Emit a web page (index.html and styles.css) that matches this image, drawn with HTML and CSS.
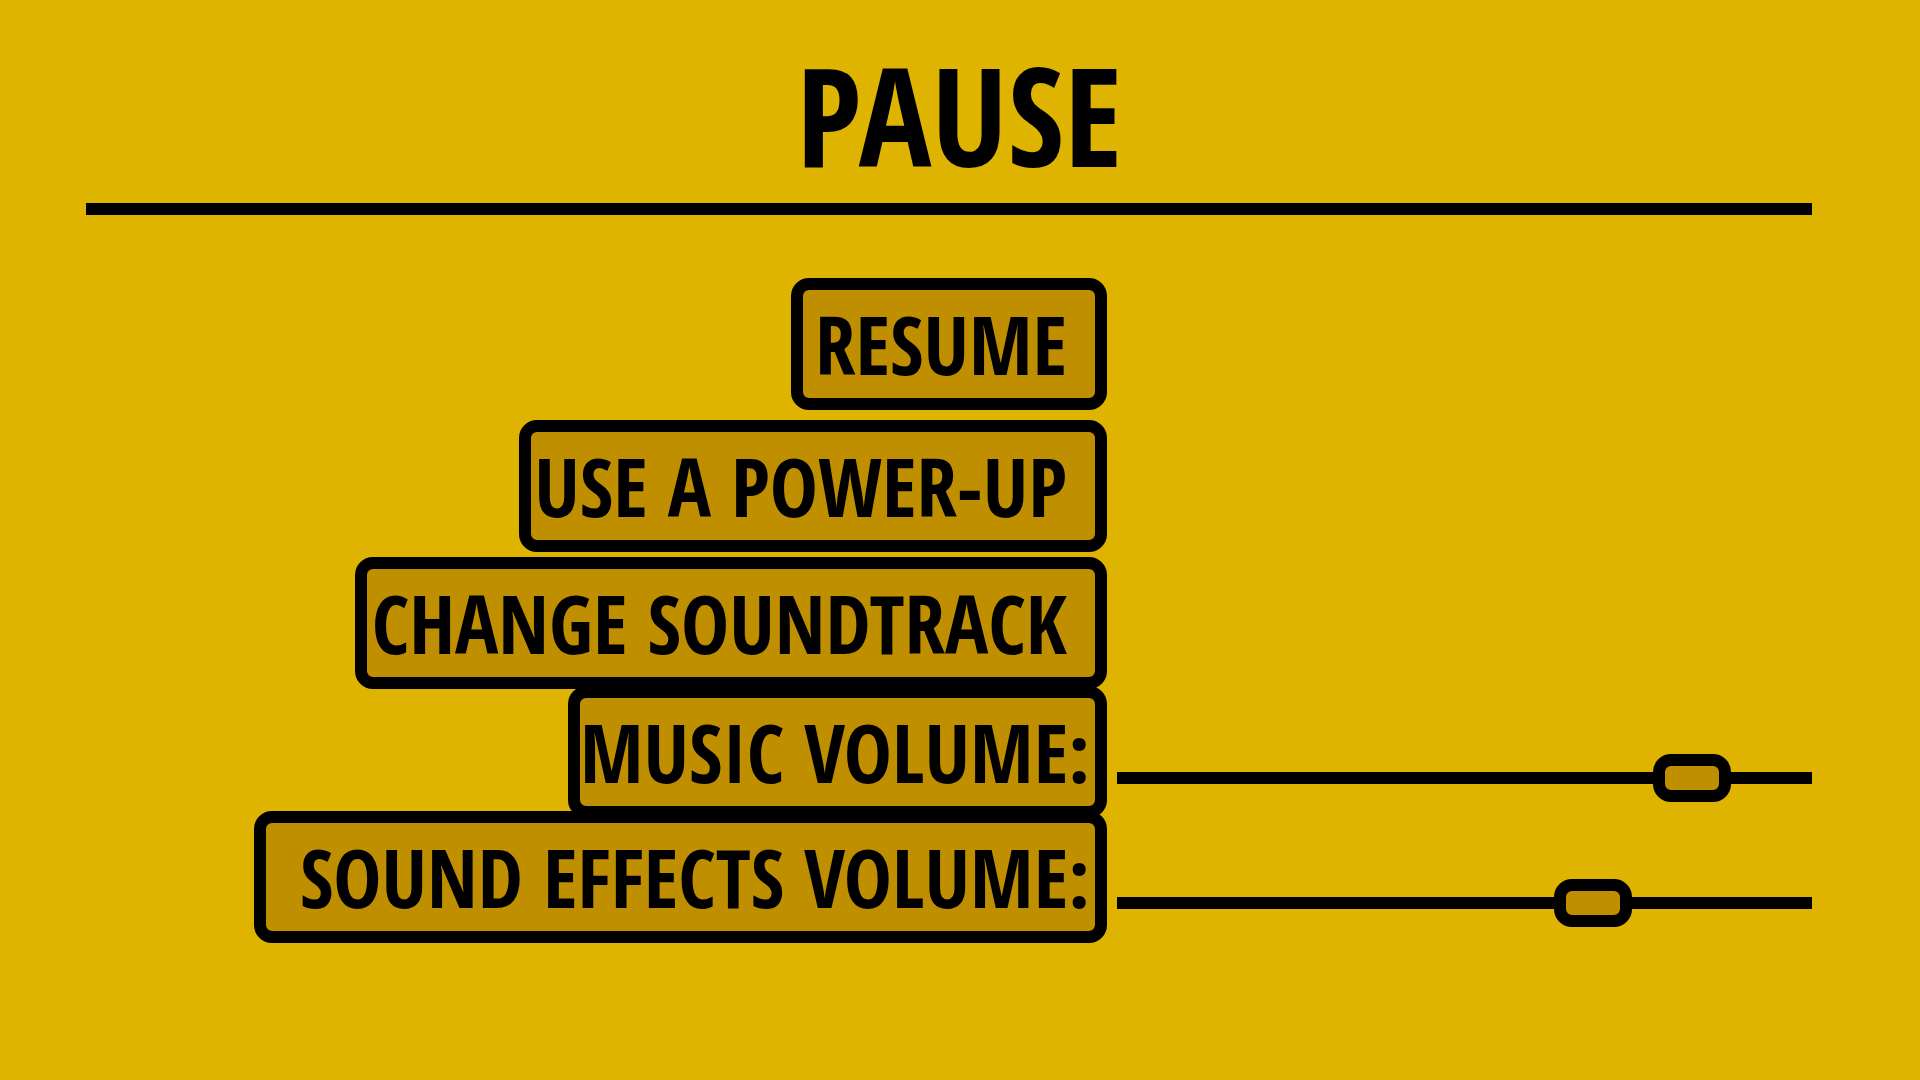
FILE: index.html
```
<!DOCTYPE html>
<html lang="en">
<head>
<meta charset="utf-8">
<meta name="viewport" content="width=device-width, initial-scale=1">
<title>Pause</title>
<link rel="stylesheet" href="styles.css">
</head>
<body>
<main class="pause">
  <header class="pause-header">
    <h1 class="pause-title">PAUSE</h1>
  </header>
  <div class="menu">
    <div class="row">
      <button class="plate plate-resume" type="button">RESUME</button>
    </div>
    <div class="row row-spaced">
      <button class="plate plate-power" type="button">USE A POWER-UP</button>
    </div>
    <div class="row row-close">
      <button class="plate plate-track" type="button">CHANGE SOUNDTRACK</button>
    </div>
    <div class="row row-joined">
      <label class="plate plate-label plate-music" for="music">MUSIC VOLUME:</label>
      <input class="slider" id="music" type="range" min="0" max="1000" value="869">
    </div>
    <div class="row row-overlapped">
      <label class="plate plate-label plate-effects" for="effects">SOUND EFFECTS VOLUME:</label>
      <input class="slider" id="effects" type="range" min="0" max="1000" value="708">
    </div>
  </div>
</main>
</body>
</html>
```
FILE: styles.css
```
:root {
  --gold: #deb400;
  --bronze: #bf8f00;
  --ink: #000;
  --stroke: 12px;
}

* {
  box-sizing: border-box;
}

body {
  margin: 0;
  min-height: 100vh;
  background: var(--gold);
  color: var(--ink);
  font-family: "Open Sans Condensed", "Roboto Condensed", "Open Sans", sans-serif;
  font-weight: 700;
}

.pause {
  padding: 26px 108px 40px 86px;
}

.pause-header {
  border-bottom: var(--stroke) solid var(--ink);
}

.pause-title {
  margin: 0;
  padding-left: 20px;
  font-size: 136px;
  line-height: 177px;
  text-align: center;
}

.menu {
  padding-top: 63px;
}

.row {
  display: grid;
  grid-template-columns: 1021fr 695fr;
  column-gap: 10px;
}

.row-spaced {
  margin-top: 10px;
}

.row-close {
  margin-top: 5px;
}

.row-joined {
  margin-top: -3px;
}

.row-overlapped {
  margin-top: -7px;
}

.plate {
  justify-self: end;
  margin: 0;
  height: 132px;
  padding: 0 28px 0 0;
  border: var(--stroke) solid var(--ink);
  border-radius: 18px;
  background: var(--bronze);
  color: inherit;
  font: inherit;
  font-size: 81px;
  line-height: 108px;
  text-align: right;
  white-space: nowrap;
}

.plate-label {
  padding-right: 5px;
}

.plate-resume {
  min-width: 316px;
}

.plate-power {
  min-width: 588px;
}

.plate-track {
  min-width: 752px;
}

.plate-music {
  min-width: 539px;
}

.plate-effects {
  min-width: 853px;
}

.slider {
  appearance: none;
  align-self: end;
  width: 100%;
  height: 48px;
  margin: 0 0 16px;
  background: transparent;
}

.slider::-webkit-slider-runnable-track {
  height: var(--stroke);
  background: var(--ink);
}

.slider::-webkit-slider-thumb {
  appearance: none;
  width: 78px;
  height: 48px;
  margin-top: -18px;
  border: var(--stroke) solid var(--ink);
  border-radius: 18px;
  background: var(--bronze);
}

.slider::-moz-range-track {
  height: var(--stroke);
  background: var(--ink);
}

.slider::-moz-range-thumb {
  width: 78px;
  height: 48px;
  border: var(--stroke) solid var(--ink);
  border-radius: 18px;
  background: var(--bronze);
}
```
